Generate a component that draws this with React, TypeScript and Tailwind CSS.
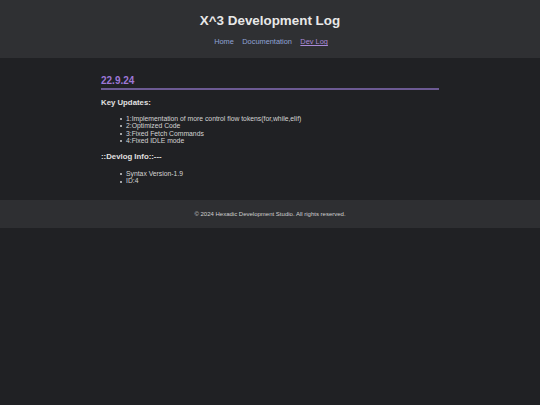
import React from "react";

function Item({ children }: { children: React.ReactNode }) {
  return (
    <li className="flex items-center">
      <span className="mr-[4.5px] mt-[1px] inline-block h-[2px] w-[2px] shrink-0 rounded-full bg-[#cfcfcf]" />
      <span>{children}</span>
    </li>
  );
}

export default function App() {
  return (
    <div className="min-h-[405px] bg-[#202124] font-['Liberation_Sans',Arial,sans-serif] text-[#d4d4d4]">
      <header className="bg-[#2f3033] pt-[13px] pb-[11.8px] text-center">
        <h1 className="text-[13.4px] font-bold leading-[16px] text-[#e8e8e8]">X^3 Development Log</h1>
        <nav className="mt-[8.2px] flex justify-center gap-[8.4px] pl-[2px] text-[7.4px] leading-[9px]">
          <a className="text-[#8fa3d6]">Home</a>
          <a className="text-[#8fa3d6]">Documentation</a>
          <a className="text-[#a98ad8] underline">Dev Log</a>
        </nav>
      </header>
      <main className="mx-auto w-[338px] pt-[16.8px] pb-[15px]">
        <h2 className="border-b-2 border-[#6c5a93] pb-[1.2px] text-[10px] font-bold leading-[12px] text-[#9d77d6]">22.9.24</h2>
        <h3 className="mt-[7.8px] text-[7.8px] font-bold leading-[9px] text-[#e0e0e0]">Key Updates:</h3>
        <ul className="mt-[7.8px] pl-[18.5px] text-[6.8px] leading-[7.55px] text-[#d4d4d4]">
          <Item>1:Implementation of more control flow tokens(for,while,elif)</Item>
          <Item>2:Optimized Code</Item>
          <Item>3:Fixed Fetch Commands</Item>
          <Item>4:Fixed IDLE mode</Item>
        </ul>
        <h3 className="mt-[7.7px] text-[7.8px] font-bold leading-[9px] text-[#e0e0e0]">::Devlog Info::---</h3>
        <ul className="mt-[8.4px] pl-[18.5px] text-[6.8px] leading-[7.55px] text-[#d4d4d4]">
          <Item>Syntax Version-1.9</Item>
          <Item>ID:4</Item>
        </ul>
      </main>
      <footer className="bg-[#2e2f32] pt-[11.5px] pb-[9.5px] text-center text-[6px] leading-[7px] text-[#d0d0d0]">
        © 2024 Hexadic Development Studio. All rights reserved.
      </footer>
    </div>
  );
}
